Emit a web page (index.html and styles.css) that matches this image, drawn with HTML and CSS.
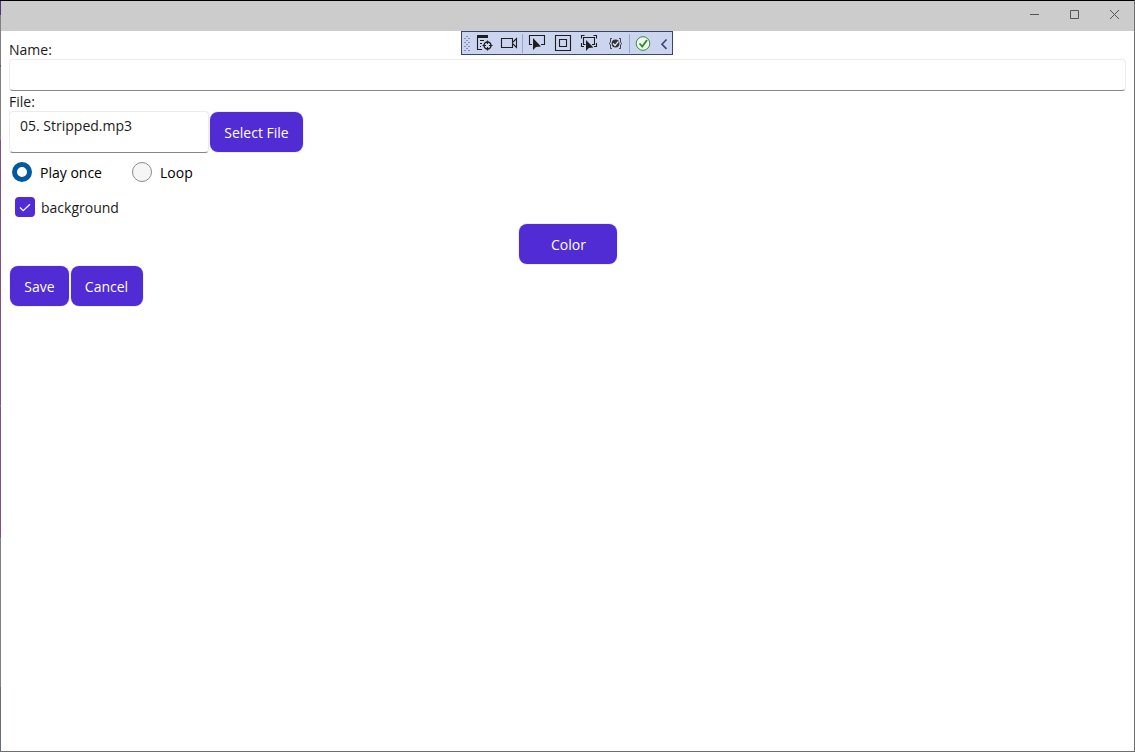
FILE: index.html
```
<!DOCTYPE html>
<html lang="en">
<head>
<meta charset="utf-8">
<title>Edit sound</title>
<link rel="stylesheet" href="styles.css">
</head>
<body>
<div class="window">
  <header class="titlebar">
    <svg class="caption" width="40" height="30" viewBox="0 0 40 30"><path d="M16 13.500h9"/></svg>
    <svg class="caption" width="40" height="30" viewBox="0 0 40 30"><path d="M16.500 9.500h8v8h-8z"/></svg>
    <svg class="caption" width="40" height="30" viewBox="0 0 40 30"><path d="M16 9l9 9M25 9l-9 9"/></svg>
  </header>
  <form class="form">
    <label class="label" for="name">Name:</label>
    <input class="entry" id="name" type="text">
    <label class="label file-label" for="file">File:</label>
    <div class="file-row">
      <div class="entry file-entry" id="file">05. Stripped.mp3</div>
      <button class="button select" type="button">Select File</button>
    </div>
    <div class="radios">
      <div class="radio"><span class="dot dot-on"></span>Play once</div>
      <div class="radio"><span class="dot"></span>Loop</div>
    </div>
    <div class="check-row">
      <span class="check"><svg width="20" height="20" viewBox="0 0 20 20"><path d="M5 10.500l3.200 3.200 6.800-6.500"/></svg></span>background
    </div>
    <button class="button color" type="button">Color</button>
    <div class="actions">
      <button class="button save" type="button">Save</button>
      <button class="button cancel" type="button">Cancel</button>
    </div>
  </form>
  <div class="debugbar">
    <svg width="210" height="22" viewBox="0 0 210 22">
      <defs>
        <pattern id="grip" width="4" height="4" patternUnits="userSpaceOnUse"><path d="M0 .5h2M2 2.500h2" stroke="#8090b8"/></pattern>
      </defs>
      <path d="M2 3h6v17H2z" fill="url(#grip)"/>
      <g class="ink">
        <path d="M15 3h11v3H15z" fill="#1e1e1e" stroke="none"/>
        <path d="M15.500 5v12.500H20M18 8.500h4M18 11.500h2M18 14.500h1"/>
        <circle cx="25.500" cy="13.500" r="3.500" stroke-width="1.400"/>
        <path d="M25.500 8.500v3.500M25.500 15v3.500M20.500 13.500H24M27 13.500h3.500"/>
        <path d="M39.500 6.500h11v9h-11z"/>
        <path d="M51 10l3.500-3.500v9l-3.500-3.500"/>
      </g>
      <path class="divider" d="M60.500 2v19"/>
      <g class="ink">
        <path d="M70 12.500h-2.500v-9h15v9H79"/>
        <path d="M71 6v12l3-3 5-.5z" fill="#1e1e1e" stroke="none"/>
        <path d="M93.500 3.500h15v15h-15zM97.500 7.500h7v7h-7z"/>
        <path d="M119.500 6.500V3.500h3M131.500 3.500h3v3M119.500 11v3.500h2.500M132 14.500h2.500V11M123.500 12.500h-2v-7h11v7H130"/>
        <path d="M124 8v11l2.800-3 4.700-.5z" fill="#1e1e1e" stroke="none"/>
        <path d="M150 6.500h-1.500v3.500l-1 1.500 1 1.500v3.500h1.500M157 6.500h1.500v3.500l1 1.500-1 1.500v3.500H157" stroke-width=".8"/>
        <circle cx="153.500" cy="11.500" r="3.900" fill="#333" stroke="none"/>
        <path d="M151 11.500l2 2 3.500-4.200" stroke="#e6eaf6" stroke-width="1.300"/>
      </g>
      <path class="divider" d="M167.500 2v19"/>
      <circle cx="181" cy="11.500" r="6.800" fill="#eef7ee" stroke="#388a34"/>
      <path d="M177.500 11.500l2.800 3 4.700-6.500" fill="none" stroke="#2b8a2b" stroke-width="1.800"/>
      <path d="M204.500 7.500l-4.500 4.700 4.500 4.700" fill="none" stroke="#3c4370" stroke-width="1.600"/>
    </svg>
  </div>
</div>
</body>
</html>
```
FILE: styles.css
```
* { box-sizing: border-box; }

body {
  margin: 0;
  font: 14px/19px "Open Sans", "Noto Sans", sans-serif;
  color: #1b1b1b;
  background: #fff;
}

.window {
  position: relative;
  width: 1135px;
  height: 752px;
  border: 1px solid #6e6e6e;
  border-top-color: #000;
  border-left: 0;
  padding-left: 1px;
  background:
    linear-gradient(#4b3578 0 14px, #808080 14px 64px, #466481 64px 66px, #808080 66px 139px, #805080 139px 404px, #6f7f6f 404px 406px, #805080 406px 537px, #808080 537px 686px, #686b7b 686px) left / 1px 100% no-repeat,
    #fff;
}

.titlebar {
  display: flex;
  justify-content: flex-end;
  height: 30px;
  background: #ccc;
}

.caption {
  fill: none;
  stroke: #555;
}

.form {
  display: flex;
  flex-direction: column;
  padding: 9px 8px 0;
}

.label {
  height: 19px;
}

.entry {
  height: 32px;
  border: 1px solid #ececec;
  border-bottom-color: #868686;
  border-radius: 4px;
  background: #fff;
  font: inherit;
}

.file-label {
  margin-top: 1px;
}

.file-row {
  display: flex;
  gap: 1px;
}

.file-entry {
  width: 200px;
  height: 42px;
  padding: 4px 10px;
}

.button {
  height: 40px;
  padding: 0;
  border: 0;
  border-radius: 8px;
  background: #512bd4;
  box-shadow: 0 0 0 1px #f0f0f4;
  color: #fff;
  font: inherit;
}

.select {
  width: 93px;
  margin-top: 1px;
}

.radios {
  display: flex;
  height: 38px;
  padding-left: 3px;
}

.radio {
  display: flex;
  align-items: center;
  gap: 8px;
  width: 120px;
  color: #000;
}

.dot {
  width: 20px;
  height: 20px;
  border: 1px solid #8b8b8b;
  border-radius: 50%;
  background: #f6f6f6;
}

.dot-on {
  border: 5px solid #005a9e;
  background: #fff;
}

.check-row {
  display: flex;
  align-items: center;
  gap: 6px;
  height: 32px;
  padding-left: 6px;
}

.check {
  width: 20px;
  height: 20px;
  border-radius: 4px;
  background: #512bd4;
}

.check svg {
  display: block;
  fill: none;
  stroke: #fff;
  stroke-width: 1.2;
}

.color {
  align-self: center;
  width: 98px;
  margin-top: 1px;
  padding-left: 2px;
}

.actions {
  display: flex;
  gap: 2px;
  padding: 2px 0 0 1px;
}

.save { width: 59px; }

.cancel {
  width: 72px;
  padding-right: 1px;
}

.debugbar {
  position: absolute;
  top: 30px;
  left: 461px;
  width: 212px;
  height: 24px;
  border: 1px solid #3b4374;
  background: #ccd5f0;
}

.debugbar svg { display: block; }

.ink {
  fill: none;
  stroke: #1e1e1e;
  stroke-width: 1.1;
}

.divider { stroke: #93a5d0; }
```
